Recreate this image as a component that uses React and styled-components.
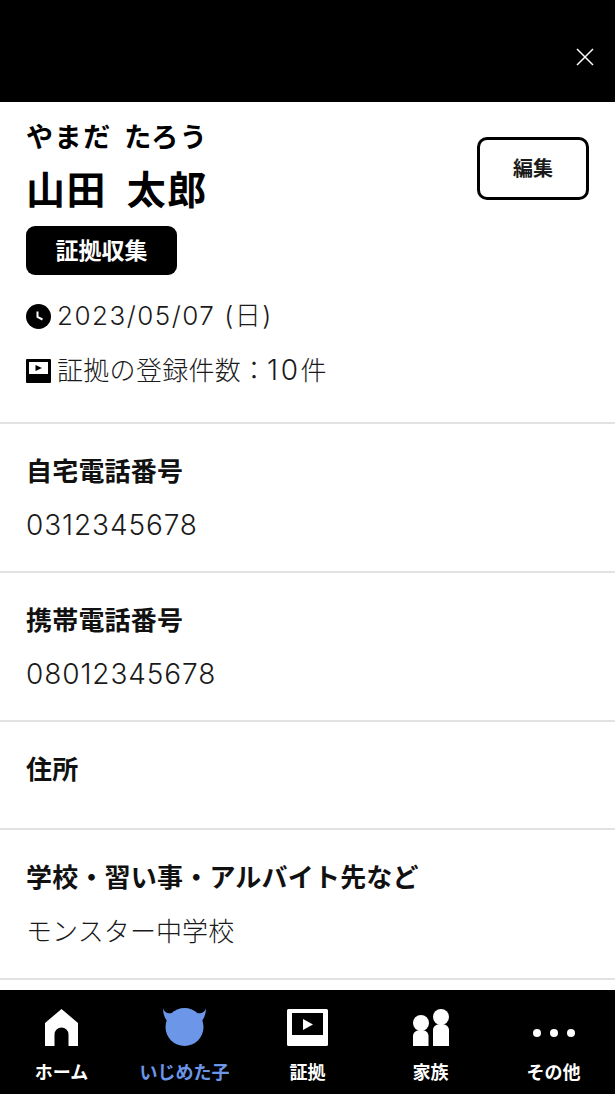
import React from 'react'
import styled, { createGlobalStyle } from 'styled-components'

const GlobalStyle = createGlobalStyle`
  html, body { margin: 0; padding: 0; background: #fff; }
  body {
    font-family: "Inter", "Noto Sans CJK JP", sans-serif;
    color: #1a1a1a;
  }
`

const Page = styled.div`
  width: 615px;
  height: 1094px;
  display: flex;
  flex-direction: column;
  overflow: hidden;
`

const TopBar = styled.header`
  height: 102px;
  flex: none;
  background: #000;
  display: flex;
  align-items: flex-start;
  justify-content: flex-end;
  padding: 48px 21px 0 0;
  box-sizing: border-box;
`

const CloseButton = styled.button`
  border: 0;
  padding: 0;
  background: none;
  width: 18px;
  height: 18px;
  display: block;
`

const Content = styled.main`
  flex: 1;
  min-height: 0;
  overflow: hidden;
`

const Profile = styled.section`
  padding: 21px 26px 0;
  height: 322px;
  box-sizing: border-box;
  border-bottom: 2px solid #e2e2e2;
  display: flex;
  justify-content: space-between;
  align-items: flex-start;
`

const ProfileInfo = styled.div`
  display: flex;
  flex-direction: column;
  align-items: flex-start;
`

const Kana = styled.div`
  font-size: 27px;
  line-height: 30px;
  font-weight: 600;
  letter-spacing: 1.6px;
  word-spacing: 4px;
  color: #000;
`

const Name = styled.h1`
  margin: 14px 0 0;
  font-size: 39px;
  line-height: 46px;
  font-weight: 600;
  letter-spacing: 1.6px;
  word-spacing: 8px;
  color: #000;
`

const Tag = styled.div`
  margin-top: 13px;
  width: 151px;
  height: 49px;
  padding-bottom: 4px;
  box-sizing: border-box;
  border-radius: 9px;
  background: #000;
  color: #fff;
  font-size: 23px;
  font-weight: 600;
  display: flex;
  align-items: center;
  justify-content: center;
`

const MetaRow = styled.div`
  margin-top: ${p => p.$top}px;
  display: flex;
  align-items: center;
  gap: 6px;
  font-size: 26px;
  line-height: 34px;
  letter-spacing: ${p => p.$spacing}px;
  color: #1a1a1a;
  font-weight: 300;
`

const Count = styled.span`
  font-size: 28px;
  letter-spacing: 2.5px;
`

const Colon = styled.span`
  display: inline-block;
  width: 26px;
  text-align: center;
`

const EditButton = styled.button`
  margin-top: 14px;
  width: 112px;
  height: 63px;
  box-sizing: border-box;
  border: 3px solid #000;
  border-radius: 10px;
  background: #fff;
  color: #1a1a1a;
  font-family: inherit;
  font-size: 20px;
  font-weight: 600;
  padding: 0 0 2px;
`

const Field = styled.section`
  box-sizing: border-box;
  height: ${p => p.$height}px;
  padding: 0 26px;
  border-bottom: 2px solid #e2e2e2;
`

const FieldLabel = styled.h2`
  margin: 0;
  padding-top: 31px;
  font-size: 26px;
  line-height: 34px;
  font-weight: 600;
  letter-spacing: 0.2px;
  color: #111;
`

const FieldValue = styled.p`
  margin: ${p => (p.$digits ? 19 : 20)}px 0 0;
  font-size: ${p => (p.$digits ? 28 : 26)}px;
  letter-spacing: ${p => (p.$digits ? 0.9 : 0.1)}px;
  line-height: 34px;
  font-weight: 300;
  color: #1a1a1a;
`

const TabBar = styled.nav`
  height: 104px;
  flex: none;
  background: #000;
  display: grid;
  grid-template-columns: repeat(5, 1fr);
`

const Tab = styled.div`
  display: flex;
  flex-direction: column;
  align-items: center;
  color: ${p => (p.$active ? '#6c96e8' : '#fff')};
`

const TabIcon = styled.div`
  height: 38px;
  margin-top: 18px;
  display: flex;
  align-items: flex-end;
  justify-content: center;
`

const TabLabel = styled.span`
  margin-top: 15px;
  font-size: 18px;
  line-height: 24px;
  font-weight: 600;
`

const Dots = styled.svg`
  margin-bottom: 9px;
`

const ClockIcon = () => (
  <svg width="25" height="25" viewBox="0 0 25 25">
    <circle cx="12.5" cy="12.5" r="12.5" fill="#000" />
    <path d="M11.5 7.5V13L16.5 15.5" stroke="#fff" strokeWidth="2" fill="none" />
  </svg>
)

const VideoIcon = () => (
  <svg width="25" height="24" viewBox="0 0 25 24">
    <path fillRule="evenodd" d="M1 0h23a1 1 0 0 1 1 1v22a1 1 0 0 1-1 1H1a1 1 0 0 1-1-1V1a1 1 0 0 1 1-1zM3 3v12h19V3z" fill="#000" />
    <path d="M9.5 6L16 9l-6.500 3z" fill="#000" />
  </svg>
)

const HomeIcon = () => (
  <svg width="33" height="37" viewBox="0 0 33 37">
    <path fillRule="evenodd" fill="#fff" d="M16.500 0L33 14V37H23.500V25.500a7 7 0 0 0-14 0V37H0V14z" />
  </svg>
)

const DevilIcon = () => (
  <svg width="43" height="38" viewBox="0 0 43 38">
    <g fill="#6c96e8">
      <circle cx="21.500" cy="19" r="19" />
      <path d="M0 0C1 4 4 6 10 5L5 14C2 11 0 6 0 0Z" />
      <path d="M43 0C42 4 39 6 33 5L38 14C41 11 43 6 43 0Z" />
    </g>
  </svg>
)

const EvidenceIcon = () => (
  <svg width="41" height="37" viewBox="0 0 41 37">
    <path fillRule="evenodd" fill="#fff" d="M1.500 0h38A1.500 1.500 0 0 1 41 1.500v34a1.500 1.500 0 0 1-1.500 1.500h-38A1.500 1.500 0 0 1 0 35.500v-34A1.500 1.500 0 0 1 1.500 0zM5 4v22h31V4z" />
    <path fill="#fff" d="M16 10l10 5.500-10 5.500z" />
  </svg>
)

const FamilyIcon = () => (
  <svg width="36" height="37" viewBox="0 0 36 37">
    <g fill="#fff">
      <circle cx="8" cy="14" r="8" />
      <circle cx="28" cy="8" r="8" />
      <path d="M0 37V27C0 23 4 21 8 21C12 21 15.500 23 15.500 27V37z" />
      <path d="M20 37V21C20 17 24 15 28 15C32 15 36 17 36 21V37z" />
    </g>
  </svg>
)

const DotsIcon = () => (
  <Dots width="42" height="8" viewBox="0 0 42 8">
    <g fill="#fff">
      <circle cx="4" cy="4" r="4" />
      <circle cx="21" cy="4" r="4" />
      <circle cx="38" cy="4" r="4" />
    </g>
  </Dots>
)

const tabs = [
  { label: 'ホーム', icon: <HomeIcon /> },
  { label: 'いじめた子', icon: <DevilIcon />, active: true },
  { label: '証拠', icon: <EvidenceIcon /> },
  { label: '家族', icon: <FamilyIcon /> },
  { label: 'その他', icon: <DotsIcon /> },
]

const fields = [
  { label: '自宅電話番号', value: '0312345678', digits: true, height: 149 },
  { label: '携帯電話番号', value: '08012345678', digits: true, height: 149 },
  { label: '住所', height: 108 },
  { label: '学校・習い事・アルバイト先など', value: 'モンスター中学校', height: 150 },
]

export default function App() {
  return (
    <Page>
      <GlobalStyle />
      <TopBar>
        <CloseButton aria-label="閉じる">
          <svg width="18" height="18" viewBox="0 0 18 18">
            <path d="M1 1l16 16M17 1L1 17" stroke="#fff" strokeWidth="1.500" />
          </svg>
        </CloseButton>
      </TopBar>
      <Content>
        <Profile>
          <ProfileInfo>
            <Kana>やまだ たろう</Kana>
            <Name>山田 太郎</Name>
            <Tag>証拠収集</Tag>
            <MetaRow $top={24} $spacing={1.5}><ClockIcon />2023/05/07 (日)</MetaRow>
            <MetaRow $top={20} $spacing={0.3}>
              <VideoIcon />
              <span>証拠の登録件数<Colon>：</Colon><Count>10</Count>件</span>
            </MetaRow>
          </ProfileInfo>
          <EditButton>編集</EditButton>
        </Profile>
        {fields.map(f => (
          <Field key={f.label} $height={f.height}>
            <FieldLabel>{f.label}</FieldLabel>
            {f.value && <FieldValue $digits={f.digits}>{f.value}</FieldValue>}
          </Field>
        ))}
      </Content>
      <TabBar>
        {tabs.map(t => (
          <Tab key={t.label} $active={t.active}>
            <TabIcon>{t.icon}</TabIcon>
            <TabLabel>{t.label}</TabLabel>
          </Tab>
        ))}
      </TabBar>
    </Page>
  )
}
